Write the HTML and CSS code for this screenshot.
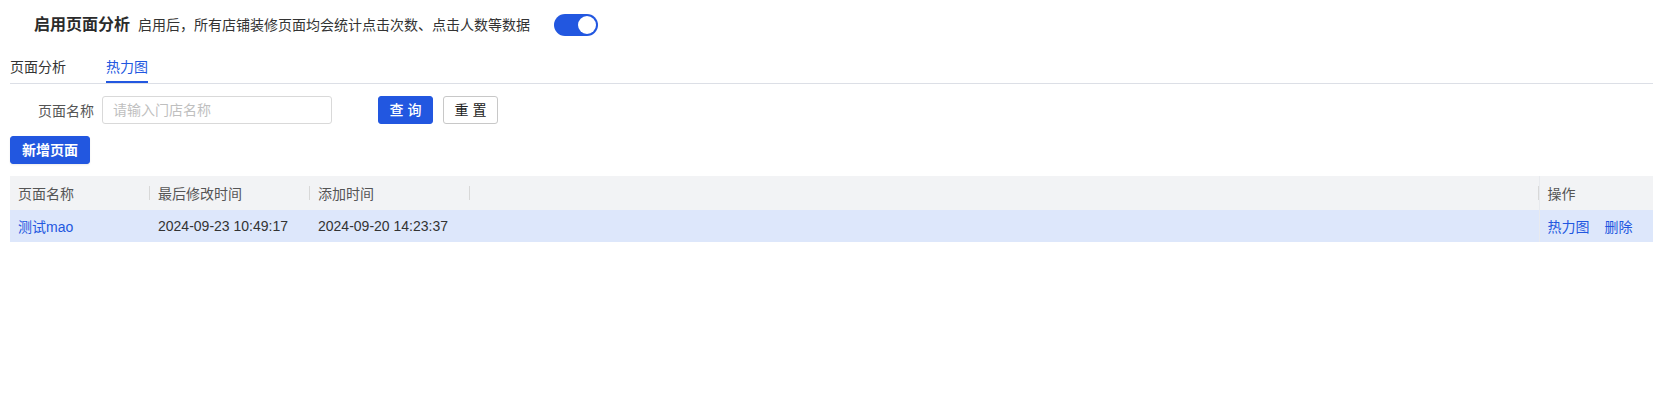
FILE: index.html
```html
<!DOCTYPE html>
<html lang="zh-CN">
<head>
<meta charset="utf-8">
<title>页面分析</title>
<link rel="stylesheet" href="styles.css">
</head>
<body>
<div class="page">
  <div class="enable-row">
    <span class="enable-title">启用页面分析</span>
    <span class="enable-desc">启用后，所有店铺装修页面均会统计点击次数、点击人数等数据</span>
    <span class="switch is-on"><span class="switch-knob"></span></span>
  </div>

  <div class="tabs">
    <div class="tab">页面分析</div>
    <div class="tab is-active">热力图</div>
  </div>

  <div class="search-row">
    <label class="search-label">页面名称</label>
    <input class="search-input" type="text" placeholder="请输入门店名称">
    <div class="search-actions">
      <button class="btn btn-primary">查 询</button>
      <button class="btn btn-default">重 置</button>
    </div>
  </div>

  <div class="toolbar">
    <button class="btn btn-primary btn-add">新增页面</button>
  </div>

  <table class="data-table">
    <colgroup>
      <col class="col-name">
      <col class="col-time">
      <col class="col-time">
      <col>
      <col class="col-ops">
    </colgroup>
    <thead>
      <tr>
        <th class="sep">页面名称</th>
        <th class="sep">最后修改时间</th>
        <th class="sep">添加时间</th>
        <th class="sep"></th>
        <th class="fixed-col">操作</th>
      </tr>
    </thead>
    <tbody>
      <tr class="is-selected">
        <td><a class="link">测试mao</a></td>
        <td>2024-09-23 10:49:17</td>
        <td>2024-09-20 14:23:37</td>
        <td></td>
        <td class="fixed-col"><a class="link">热力图</a><a class="link link-gap">删除</a></td>
      </tr>
    </tbody>
  </table>
</div>
</body>
</html>
```

FILE: styles.css
```css
html, body {
  margin: 0;
  padding: 0;
  background: #ffffff;
}

body {
  font-family: "Liberation Sans", "Noto Sans CJK SC", sans-serif;
  font-size: 14px;
  color: #333333;
}

.page {
  padding-left: 10px;
}

/* top enable row */
.enable-row {
  height: 50px;
  display: flex;
  align-items: center;
  padding-left: 24px;
}

.enable-title {
  font-size: 16px;
  font-weight: bold;
  color: #2b2b2b;
  line-height: 22px;
}

.enable-desc {
  margin-left: 8px;
  font-size: 14px;
  line-height: 22px;
  color: #333333;
}

.switch {
  margin-left: 24px;
  width: 44px;
  height: 22px;
  border-radius: 11px;
  background: #2257e0;
  display: flex;
  align-items: center;
  justify-content: flex-end;
  padding: 0 2px;
  box-sizing: border-box;
}

.switch-knob {
  width: 18px;
  height: 18px;
  border-radius: 50%;
  background: #ffffff;
}

/* tabs */
.tabs {
  margin-top: 3px;
  display: flex;
  gap: 40px;
  border-bottom: 1px solid #dcdfe6;
}

.tab {
  line-height: 28px;
  font-size: 14px;
  color: #333333;
  border-bottom: 2px solid transparent;
}

.tab.is-active {
  color: #2257e0;
  border-bottom-color: #2257e0;
}

/* search row */
.search-row {
  margin-top: 12px;
  display: flex;
  align-items: center;
  height: 28px;
}

.search-label {
  width: 92px;
  box-sizing: border-box;
  padding-right: 8px;
  text-align: right;
  color: #555555;
  font-size: 14px;
}

.search-input {
  width: 230px;
  height: 28px;
  box-sizing: border-box;
  border: 1px solid #d9d9d9;
  border-radius: 3px;
  padding: 0 10px;
  font-family: inherit;
  font-size: 14px;
  color: #333333;
  outline: none;
}

.search-input::placeholder {
  color: #bfbfbf;
}

.search-actions {
  margin-left: 46px;
  display: flex;
  gap: 10px;
}

.btn {
  height: 28px;
  box-sizing: border-box;
  border-radius: 3px;
  font-family: inherit;
  font-size: 14px;
  padding: 0;
  cursor: pointer;
  line-height: 26px;
}

.search-actions .btn {
  width: 55px;
}

.btn-primary {
  background: #2257e0;
  border: 1px solid #2257e0;
  color: #ffffff;
  font-weight: 500;
}

.btn-default {
  background: #ffffff;
  border: 1px solid #c8c8c8;
  color: #222222;
}

/* toolbar */
.toolbar {
  margin-top: 12px;
  display: flex;
}

.btn-add {
  width: 80px;
  font-weight: bold;
  box-shadow: 0 1px 2px rgba(0, 0, 0, 0.08);
}

/* table */
.data-table {
  margin-top: 12px;
  width: 100%;
  border-collapse: collapse;
  table-layout: fixed;
}

.col-name { width: 140px; }
.col-time { width: 160px; }
.col-ops { width: 114px; }

.data-table th {
  position: relative;
  height: 34px;
  padding: 0 8px;
  background: #f2f3f5;
  color: #555555;
  font-weight: normal;
  text-align: left;
  font-size: 14px;
}

.data-table th.sep::after {
  content: "";
  position: absolute;
  right: 0;
  top: 10px;
  width: 1px;
  height: 14px;
  background: #d8d8d8;
}

.data-table td {
  height: 32px;
  padding: 0 8px;
  font-size: 14px;
  color: #333333;
  white-space: nowrap;
}

.data-table tr.is-selected td {
  background: #dde7fb;
}

.data-table .fixed-col {
  border-left: 1px solid #e8eaee;
}

.link {
  color: #2257e0;
  text-decoration: none;
  cursor: pointer;
}

.link-gap {
  margin-left: 15px;
}
```
